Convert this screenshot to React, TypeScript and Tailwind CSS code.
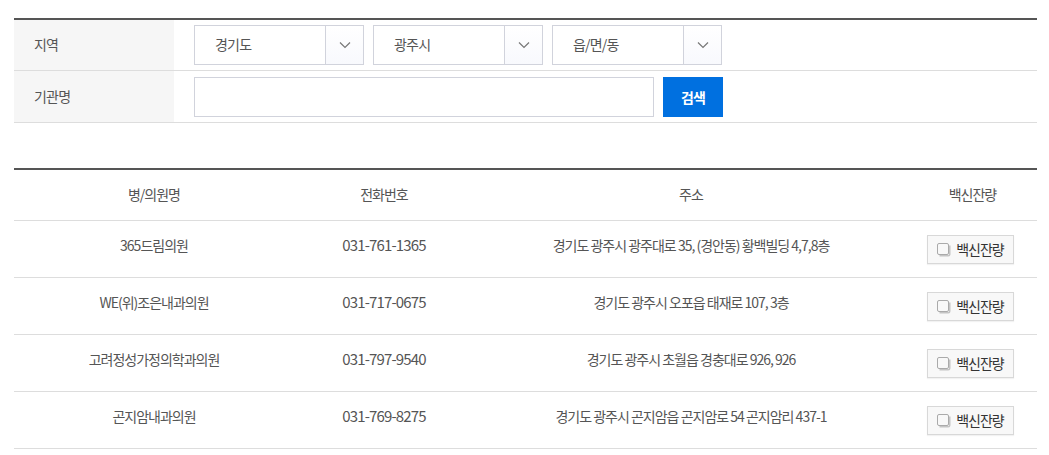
const font = { fontFamily: '"Noto Sans CJK KR", "Noto Sans", sans-serif' };

const rows = [
  ["365드림의원", "031-761-1365", "경기도 광주시 광주대로 35, (경안동) 황백빌딩 4,7,8층"],
  ["WE(위)조은내과의원", "031-717-0675", "경기도 광주시 오포읍 태재로 107, 3층"],
  ["고려정성가정의학과의원", "031-797-9540", "경기도 광주시 초월읍 경충대로 926, 926"],
  ["곤지암내과의원", "031-769-8275", "경기도 광주시 곤지암읍 곤지암로 54 곤지암리 437-1"],
];

function Select({ label }: { label: string }) {
  return (
    <div className="flex h-10 w-[170px] border border-[#d1d3dc] bg-white pl-5">
      <div className="flex-1 text-[14px] leading-[36px] text-[#555]">{label}</div>
      <div className="flex w-[38px] items-center justify-center border-l border-[#d1d3dc] bg-gradient-to-b from-white to-[#f8f9fd]">
        <svg width="12" height="8" viewBox="0 0 12 8" fill="none" stroke="#777" strokeWidth="1.2">
          <path d="M1 1.5 6 6.5 11 1.5" />
        </svg>
      </div>
    </div>
  );
}

export default function App() {
  return (
    <div className="h-[455px] w-[1049px] overflow-hidden bg-white pl-[14px] pr-3 pt-[18px] tracking-[-0.8px] text-[#555]" style={font}>
      <div className="border-t-2 border-[#555]">
        <div className="flex h-[51px] border-b border-[#ddd]">
          <div className="w-40 bg-[#f6f6f6] pl-[20px] text-[14px] leading-[49px]">지역</div>
          <div className="flex gap-[9px] pl-5 pt-[5px]">
            <Select label="경기도" />
            <Select label="광주시" />
            <Select label="읍/면/동" />
          </div>
        </div>
        <div className="flex h-[52px] border-b border-[#ddd]">
          <div className="w-40 bg-[#f6f6f6] pl-[20px] text-[14px] leading-[50px]">기관명</div>
          <div className="flex gap-[9px] pl-5 pt-[6px]">
            <div className="h-10 w-[460px] border border-[#d1d3dc] bg-white" />
            <button className="h-10 w-[60px] bg-[#0070e0] text-[14px] font-bold text-white">검색</button>
          </div>
        </div>
      </div>

      <table className="mt-[45px] w-[1023px] table-fixed border-t-2 border-[#555] text-center text-[14px] tracking-[-1px]">
        <colgroup>
          <col className="w-[280px]" />
          <col className="w-[180px]" />
          <col className="w-[434px]" />
          <col className="w-[129px]" />
        </colgroup>
        <thead>
          <tr className="h-[51px] border-b border-[#ddd]">
            <th className="font-normal">병/의원명</th>
            <th className="font-normal">전화번호</th>
            <th className="font-normal">주소</th>
            <th className="font-normal">백신잔량</th>
          </tr>
        </thead>
        <tbody>
          {rows.map((r) => (
            <tr key={r[0]} className="h-[57px] border-b border-[#ddd]">
              <td className="pb-[6px]">{r[0]}</td>
              <td className="pb-[6px] text-[15px] tracking-[-0.85px]">{r[1]}</td>
              <td className="pb-[6px]">{r[2]}</td>
              <td className="pl-[19px] pt-[2px] text-left">
                <button className="flex h-[29px] w-[87px] items-center justify-center gap-[5px] border border-[#d8d8d8] bg-[#f8f8f8] text-[14px] text-[#333] shadow-[0_1px_1px_rgba(0,0,0,0.05)]">
                  <svg className="shrink-0" width="14" height="14" viewBox="0 0 14 14" fill="none">
                    <rect x="0.5" y="0.5" width="11" height="11" rx="1.5" stroke="#aaa" />
                    <path d="M12.75 2.5v8.75a1.5 1.5 0 0 1-1.5 1.5H2.5" stroke="#c4c4c4" strokeWidth="1.5" />
                  </svg>
                  백신잔량
                </button>
              </td>
            </tr>
          ))}
        </tbody>
      </table>
    </div>
  );
}
